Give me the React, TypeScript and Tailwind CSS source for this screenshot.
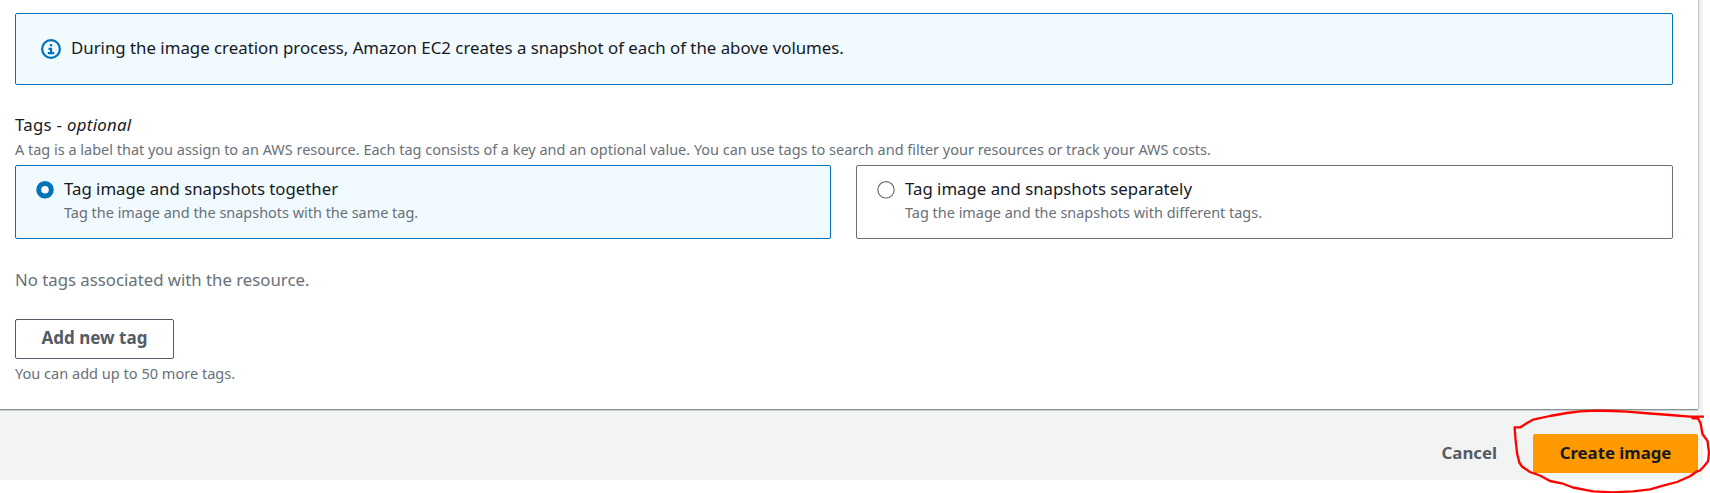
type TagMode = {
  title: string;
  description: string;
  selected: boolean;
};

const tagModes: TagMode[] = [
  {
    title: 'Tag image and snapshots together',
    description: 'Tag the image and the snapshots with the same tag.',
    selected: true,
  },
  {
    title: 'Tag image and snapshots separately',
    description: 'Tag the image and the snapshots with different tags.',
    selected: false,
  },
];

function InfoIcon() {
  return (
    <svg viewBox="0 0 16 16" className="mt-px size-5 shrink-0" fill="none" stroke="#0073bb" strokeWidth="1.8">
      <circle cx="8" cy="8" r="7.1" />
      <path d="M8 4v1.8M6 7.8h2V11M5.4 11.2h5.2" />
    </svg>
  );
}

function Radio({ selected }: { selected: boolean }) {
  return (
    <svg viewBox="0 0 18 18" className="mt-[3px] size-[18px] shrink-0">
      {selected ? (
        <circle cx="9" cy="8.8" r="6.3" fill="#fff" stroke="#0073bb" strokeWidth="5" />
      ) : (
        <circle cx="9" cy="8.8" r="8.2" fill="#fff" stroke="#687078" strokeWidth="1.2" />
      )}
    </svg>
  );
}

function TagModeTile({ title, description, selected }: TagMode) {
  return (
    <label
      className={`flex h-[74px] gap-[10px] rounded-[2px] border pl-5 pt-3 ${
        selected ? 'border-[#0073bb] bg-[#f1faff]' : 'border-[#687078] bg-white'
      }`}
    >
      <Radio selected={selected} />
      <span className="flex flex-col">
        <span className="h-[25px] text-[16.8px] leading-[22px] text-[#16191f]">{title}</span>
        <span className="text-[14.45px] leading-5 text-[#687078]">{description}</span>
      </span>
    </label>
  );
}

function HandDrawnCircle() {
  return (
    <svg
      viewBox="0 0 210 90"
      className="pointer-events-none absolute left-[1500px] top-[403px] h-[90px] w-[210px]"
      fill="none"
      stroke="#ff0000"
      strokeWidth="2.3"
      strokeLinejoin="round"
    >
      <path d="M204 13.7H190L170 12L150 10.5L127 8.7L113 8L97 7.6L80 8.3L67 10L50 13L33 16.7L27 20L20.5 24.3H14.6L15.5 36L17 50L19.3 59.5L22 63.5L30 69L40 72.5L50 78L63 80.7L73 84.5L93 88.3L113 89.3L133 88.3L150 86.3L163 82.7L177 79L190 73.3L197 68.3L200 67.5L204 63.3L208 58.3L209 50L207.5 38L202.5 31L200.5 20L198 15.7L191.5 15" />
    </svg>
  );
}

export default function App() {
  return (
    <div className="relative h-[493px] w-[1710px] overflow-hidden bg-white font-['Noto_Sans',sans-serif]">
      <div className="h-[480px] w-[1703px] bg-[#f2f3f3]">
        <main className="flex h-[409px] w-[1698px] flex-col items-start bg-white pl-[15px] pr-[25px] pt-[13px] shadow-[0_1px_0_0_#879596,1px_0_0_0_#c3c9ca,0_2px_0_0_#c9cdce,2px_0_0_0_#e6e8e8]">
          <div className="flex h-[72px] w-full gap-[10px] rounded-[2px] border border-[#0073bb] bg-[#f1faff] pl-[25px] pt-6">
            <InfoIcon />
            <p className="text-[16.82px] leading-[20px] text-[#16191f]">
              During the image creation process, Amazon EC2 creates a snapshot of each of the above volumes.
            </p>
          </div>

          <h2 className="mt-[26px] text-[16.8px] leading-[28px] tracking-[0.3px] text-[#16191f]">
            Tags - <i className="tracking-[0.3px]">optional</i>
          </h2>
          <p className="mt-px text-[14.48px] leading-[20px] text-[#687078]">
            A tag is a label that you assign to an AWS resource. Each tag consists of a key and an optional value. You
            can use tags to search and filter your resources or track your AWS costs.
          </p>
          <div className="mt-[5px] grid w-full grid-cols-[816px_817px] gap-[25px]">
            {tagModes.map((mode) => (
              <TagModeTile key={mode.title} {...mode} />
            ))}
          </div>

          <p className="mt-[27px] text-[16.75px] leading-[28px] text-[#687078]">
            No tags associated with the resource.
          </p>
          <button className="mt-[25px] h-10 w-[159px] rounded-[2px] border border-[#545b64] bg-white pb-[2px] text-[17px] font-bold leading-6 text-[#545b64]">
            Add new tag
          </button>
          <p className="mt-1 text-[14.55px] leading-5 text-[#687078]">You can add up to 50 more tags.</p>
        </main>

        <footer className="flex w-[1698px] items-center justify-end gap-9 pt-[25px]">
          <button className="h-[39px] pb-[1px] text-[16.8px] font-bold leading-6 text-[#545b64]">Cancel</button>
          <button className="h-[39px] w-[165px] rounded-[2px] bg-[#ff9900] pb-[1px] text-[16.8px] font-bold leading-6 text-[#16191f]">
            Create image
          </button>
        </footer>
      </div>
      <HandDrawnCircle />
    </div>
  );
}
